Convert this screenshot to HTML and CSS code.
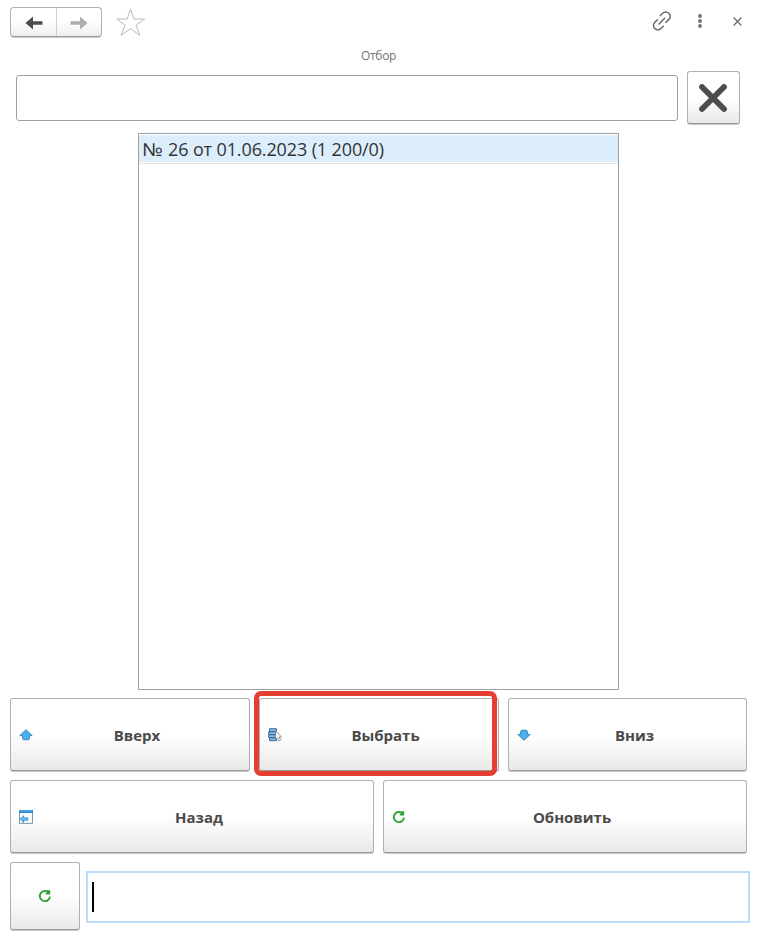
FILE: index.html
```html
<!DOCTYPE html>
<html lang="ru">
<head>
<meta charset="utf-8">
<title>Отбор</title>
<link rel="stylesheet" href="styles.css">
</head>
<body>
<main class="window">
  <header class="toolbar">
    <div class="history">
      <button class="history-btn" aria-label="Предыдущее"><svg width="18" height="14" viewBox="0 0 18 14"><path d="M0.5 7 8 0.5V5.2H17.5V8.8H8V13.5Z" fill="#4d4d4d"/></svg></button>
      <button class="history-btn" aria-label="Следующее"><svg width="18" height="14" viewBox="0 0 18 14"><path d="M17.5 7 10 0.5V5.2H.5V8.8H10V13.5Z" fill="#adadad"/></svg></button>
    </div>
    <svg class="star" width="30" height="29" viewBox="0 0 30 29"><path d="M14.5 1.2 17.9 11H28.6L20.1 17.2 23.8 27.2 14.5 20.8 5.2 27.2 8.9 17.2.8 11H11.1Z" fill="#fff" stroke="#b4bac2"/></svg>
    <svg class="link" width="20" height="20" viewBox="0 0 20 20" fill="none" stroke="#6a6a6a" stroke-width="1.5" stroke-linecap="round"><path d="M8.2 4.7 10.6 2.3a4.2 4.2 0 0 1 6.3 0 4.2 4.2 0 0 1 0 6.1L14 11.2M11.3 15.2 9 17.5a4.2 4.2 0 0 1-6.2 0 4.2 4.2 0 0 1 0-6.1L5.5 8.8M7 13l5.6-5.7"/></svg>
    <svg class="more" width="4" height="14" viewBox="0 0 4 14" fill="#707070"><circle cx="2" cy="2" r="1.9"/><circle cx="2" cy="7" r="1.9"/><circle cx="2" cy="12" r="1.9"/></svg>
    <svg class="close" width="9" height="9" viewBox="0 0 9 9" stroke="#707070" stroke-width="1.4"><path d="M.6.6 8.4 8.4M8.4.6.6 8.4"/></svg>
  </header>
  <div class="caption">Отбор</div>
  <div class="filter">
    <div class="filter-input"></div>
    <button class="btn clear" aria-label="Очистить"><svg width="28" height="28" viewBox="0 0 28 28" stroke="#4d4d4d" stroke-width="5.8" stroke-linecap="round"><path d="M3 3 25 25M25 3 3 25"/></svg></button>
  </div>
  <div class="list"><div class="list-row"><span class="numero">№ </span><span>26 от 01.06.2023 (1 200/0)</span></div></div>
  <div class="actions three">
    <button class="btn"><svg width="14" height="12" viewBox="0 0 14 12"><path d="M7 .7 13.2 6.6H10.4V9.5L9.5 10.8H4.5L3.6 9.5V6.6H.8Z" fill="#4bb0ec" stroke="#2b7fb5" stroke-width=".9"/></svg><span>Вверх</span></button>
    <button class="btn selected"><svg width="15" height="14" viewBox="0 0 15 14"><path d="M1.5.7h7v3h-7zM.7 3.7h7v3h-7zM.7 6.7h7v3h-7zM1.5 9.7h7v3h-7z" fill="#8ab8e6" stroke="#3d6e9f"/><path d="M7.5 2.5V11.4L9.5 9.7 11 12.8 12.6 12 11.2 9H13.5Z" fill="#fff" stroke="#777" stroke-width=".8"/></svg><span>Выбрать</span></button>
    <button class="btn"><svg width="14" height="12" viewBox="0 0 14 12"><path d="M7 11.3 13.2 5.4H10.4V2.5L9.5 1.2H4.5L3.6 2.5V5.4H.8Z" fill="#4bb0ec" stroke="#2b7fb5" stroke-width=".9"/></svg><span>Вниз</span></button>
  </div>
  <div class="actions two">
    <button class="btn"><svg width="14" height="14" viewBox="0 0 14 14"><path d="M.5 1h13v12.4H.5z" fill="#f8fafc" stroke="#7796b2"/><path d="M0 0h14v3H0z" fill="#2f8bd3"/><path d="M1 .6h12v.8H1z" fill="#69bbf2"/><path d="M1.2 9.1 4.6 5.8V7.8H8.8V10.3H4.6V12.4Z" fill="#60c2f3" stroke="#347fae" stroke-width=".7"/></svg><span>Назад</span></button>
    <button class="btn"><svg width="14" height="14" viewBox="0 0 14 14"><path d="M10.3 3.2A5.1 5.1 0 1 0 12 7.7" fill="none" stroke="#31a336" stroke-width="1.9"/><path d="M7.7 5.4V4L9.3 3 8.8 1.3H12.2V5.4Z" fill="#31a336"/></svg><span>Обновить</span></button>
  </div>
  <div class="entry">
    <button class="btn refresh" aria-label="Обновить"><svg width="14" height="14" viewBox="0 0 14 14"><path d="M10.3 3.2A5.1 5.1 0 1 0 12 7.7" fill="none" stroke="#31a336" stroke-width="1.9"/><path d="M7.7 5.4V4L9.3 3 8.8 1.3H12.2V5.4Z" fill="#31a336"/></svg></button>
    <div class="entry-input"><i class="caret"></i></div>
  </div>
</main>
</body>
</html>
```
FILE: styles.css
```css
*, *::after { box-sizing: border-box; }
body { margin: 0; background: #fff; font-family: "Open Sans", "Noto Sans", sans-serif; color: #333; }
svg { display: block; flex: none; }
.window { width: 763px; height: 939px; overflow: hidden; padding: 7px 13px 0 10px; }
.toolbar { display: flex; align-items: flex-start; height: 41px; }
.history {
  display: flex; width: 92px; height: 30px;
  border: 1px solid #b0b0b0; border-bottom-color: #999; border-radius: 4px;
  box-shadow: 0 1px 0 #c8c8c8;
  background: linear-gradient(#fff 45%, #eee);
}
.history-btn {
  flex: 0 0 45px; display: flex; align-items: center; justify-content: center;
  padding: 1px 0 0; border: 0; background: none;
}
.history-btn + .history-btn { border-left: 1px solid #d0d0d0; padding-right: 1px; }
.star { margin: 1px 0 0 14px; }
.link { margin: 4px 0 0 auto; }
.more { margin: 7px 0 0 26px; }
.close { margin: 10px 8px 0 31px; }
.caption {
  width: 737px; height: 23px; line-height: 16px; text-align: center;
  font-size: 12px; letter-spacing: -.3px; color: #77736a;
}
.filter { display: flex; align-items: flex-start; height: 62px; padding-left: 6px; gap: 9px; }
.filter-input { width: 662px; height: 46px; margin-top: 4px; border: 1px solid #a0a0a0; border-radius: 3px; }
.btn {
  display: flex; align-items: center; padding: 0 8px;
  border: 1px solid #b0b0b0; border-bottom-color: #999; border-radius: 3px;
  box-shadow: 0 1px 0 #c8c8c8;
  background: linear-gradient(#fff 50%, #e9e9e9);
  font: bold 15px "Open Sans", "Noto Sans", sans-serif; color: #4a4a4a;
}
.btn span { flex: 1; text-align: center; }
.clear { width: 53px; height: 53px; padding: 0 1px 0 0; justify-content: center; }
.list { width: 481px; height: 557px; margin-left: 128px; border: 1px solid #a0a0a0; }
.list-row {
  display: flex; height: 30px; padding-left: 3px; line-height: 29px;
  font-size: 18px; white-space: nowrap; letter-spacing: -.12px;
  background: #dceefc; border-top: 1px solid #fff; border-bottom: 1px solid #e3e3e3;
  box-shadow: inset 0 -1px 0 #fff;
}
.numero { width: 26px; transform: scaleX(1.14); transform-origin: 0 50%; }
.actions { display: grid; gap: 9px; width: 737px; height: 73px; margin-top: 8px; }
.actions + .actions { margin-top: 9px; }
.three { grid-template-columns: 240px 240px 239px; }
.two { grid-template-columns: 1fr 1fr; }
.selected { position: relative; }
.selected span { padding-right: 2px; }
.selected::after {
  content: ""; position: absolute; left: -6px; top: -8px; width: 243px; height: 85px;
  border: 5px solid #e63e32; border-radius: 7px;
}
.entry { display: flex; align-items: flex-start; gap: 6px; margin-top: 9px; }
.refresh { width: 70px; height: 68px; padding: 0; justify-content: center; }
.entry-input { width: 664px; flex: none; height: 52px; margin-top: 9px; padding: 9px 4px; border: 2px solid #b9ddfa; }
.caret { display: block; width: 2px; height: 30px; background: #000; }
```
